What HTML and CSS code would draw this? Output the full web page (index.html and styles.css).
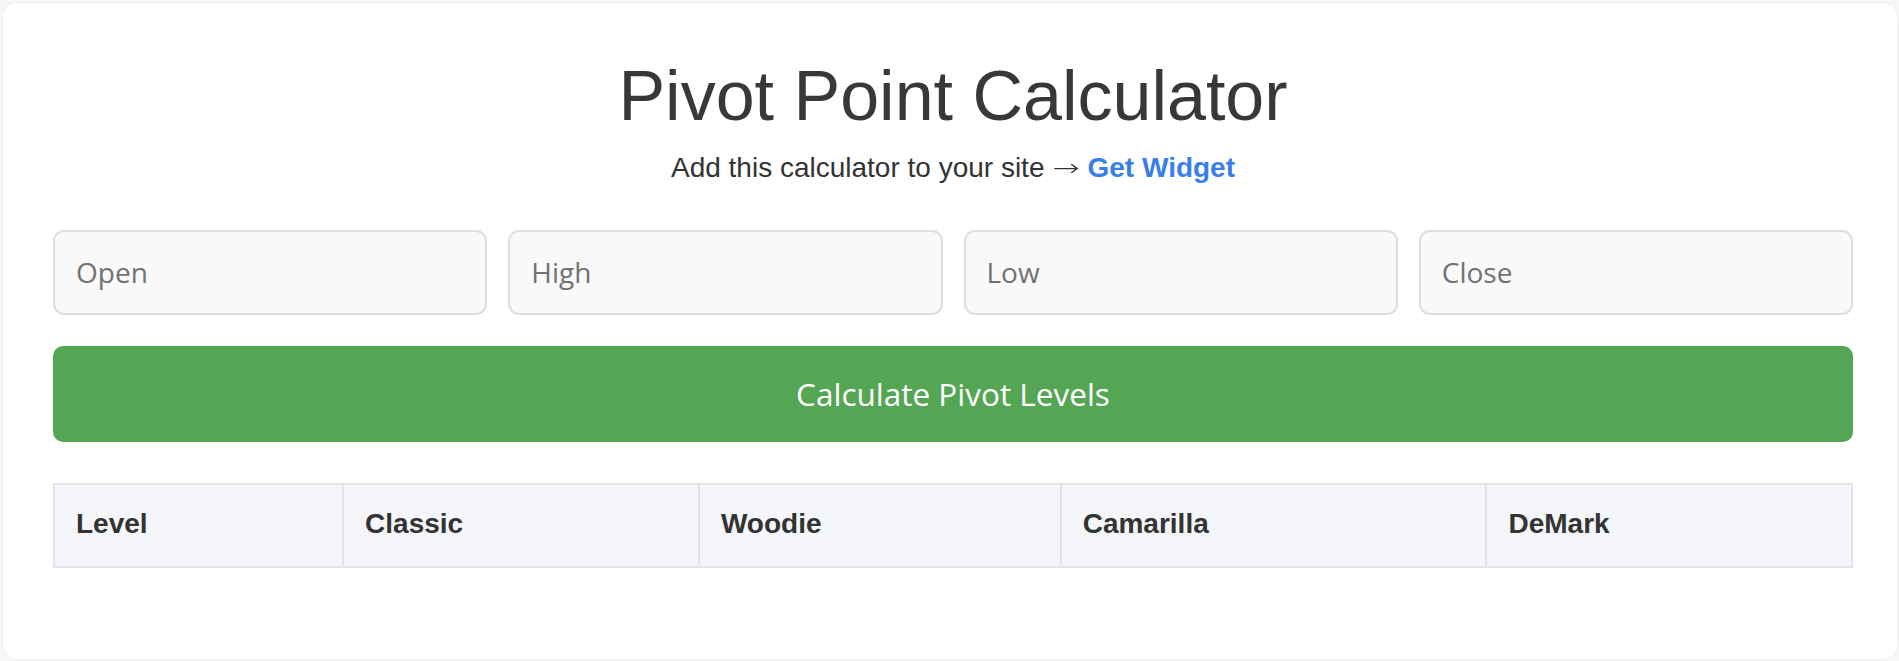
FILE: index.html
```html
<!DOCTYPE html>
<html lang="en">
<head>
<meta charset="utf-8">
<title>Pivot Point Calculator</title>
<link rel="stylesheet" href="styles.css">
</head>
<body>
  <main class="card">
    <h1 class="title">Pivot Point Calculator</h1>
    <p class="subtitle">Add this calculator to your site <span class="arrow">→</span> <a class="widget-link" href="#">Get Widget</a></p>
    <div class="inputs">
      <input class="field" type="text" placeholder="Open">
      <input class="field" type="text" placeholder="High">
      <input class="field" type="text" placeholder="Low">
      <input class="field" type="text" placeholder="Close">
    </div>
    <button class="calc-btn" type="button">Calculate Pivot Levels</button>
    <table class="levels">
      <colgroup>
        <col class="c-level">
        <col class="c-classic">
        <col class="c-woodie">
        <col class="c-camarilla">
        <col class="c-demark">
      </colgroup>
      <thead>
        <tr>
          <th>Level</th>
          <th>Classic</th>
          <th>Woodie</th>
          <th>Camarilla</th>
          <th>DeMark</th>
        </tr>
      </thead>
    </table>
  </main>
</body>
</html>
```
FILE: styles.css
```css
* {
  box-sizing: border-box;
}

html, body {
  margin: 0;
  padding: 0;
  background: #f7f7f7;
}

body {
  font-family: "Liberation Sans", Arial, sans-serif;
  color: #333;
  padding: 3px 2px 2px 3px;
}

.card {
  background: #ffffff;
  border-radius: 14px;
  box-shadow: 0 0 3px rgba(0, 0, 0, 0.08);
  padding: 51px 44px 92px 50px;
  height: 656px;
}

.title {
  margin: 0;
  font-size: 70px;
  line-height: 84px;
  font-weight: 400;
  text-align: center;
  color: #383838;
}

.subtitle {
  margin: 12.5px 0 0;
  font-size: 28px;
  line-height: 34px;
  text-align: center;
  color: #333;
}

.arrow {
  display: inline-block;
  font-family: "DejaVu Sans", sans-serif;
  font-weight: 300;
  transform: scale(1.15, 0.85);
  margin: 0 2px;
}

.widget-link {
  color: #3a7ee9;
  font-weight: 700;
  text-decoration: none;
}

.inputs {
  margin-top: 45px;
  display: grid;
  grid-template-columns: repeat(4, 1fr);
  gap: 21px;
}

.field {
  height: 85px;
  border: 2px solid #dedede;
  border-radius: 11px;
  background: #f9f9f9;
  padding: 0 21px;
  font-family: "Open Sans", sans-serif;
  font-size: 28px;
  color: #333;
  outline: none;
  min-width: 0;
}

.field::placeholder {
  color: #727272;
}

.calc-btn {
  display: block;
  width: 100%;
  margin-top: 31px;
  height: 96px;
  border: none;
  border-radius: 10px;
  background: #54a654;
  color: #ffffff;
  font-family: "Open Sans", sans-serif;
  font-size: 31.5px;
  cursor: pointer;
}

.levels {
  margin-top: 41px;
  width: 100%;
  border-collapse: collapse;
  table-layout: fixed;
}

.c-level { width: 16.08%; }
.c-classic { width: 19.79%; }
.c-woodie { width: 20.12%; }
.c-camarilla { width: 23.68%; }
.c-demark { width: 20.33%; }

.levels th {
  background: #f5f6fa;
  border: 2px solid #e2e4e7;
  padding: 23.5px 21px 25.5px;
  font-size: 28px;
  line-height: 32px;
  font-weight: 700;
  text-align: left;
  color: #333;
}
```
